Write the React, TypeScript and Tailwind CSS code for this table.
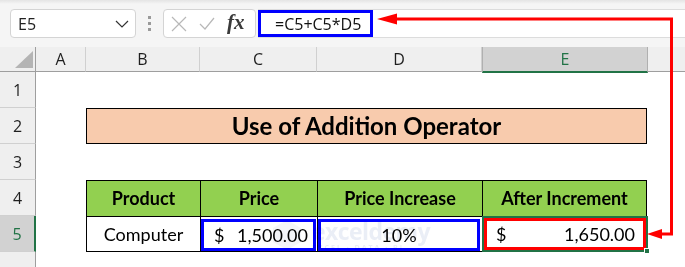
import React from 'react';

const cols = ['A', 'B', 'C', 'D', 'E'];

function ColHeader({ label, active }: { label: string; active?: boolean }) {
  if (active) {
    return (
      <div className="flex items-center justify-center bg-[#d2d2d2] border-x border-[#b0b0b0] border-b-2 border-b-[#217346] text-[#217346] text-[16px]">
        {label}
      </div>
    );
  }
  return (
    <div className="flex items-center justify-center border-r border-[#d0d0d0] border-b border-b-[#9e9e9e] text-[#1f1f1f] text-[16px]">
      {label}
    </div>
  );
}

function RowHeader({ n, active }: { n?: number; active?: boolean }) {
  return (
    <div
      className={`flex items-center justify-center text-[16px] border-b border-[#d0d0d0] ${
        active
          ? 'bg-[#d2d2d2] text-[#217346] border-r-2 border-r-[#217346]'
          : 'bg-[#efefef] text-[#1f1f1f] border-r border-r-[#9e9e9e]'
      }`}
    >
      {n}
    </div>
  );
}

function Watermark() {
  return (
    <div className="absolute left-[272px] top-[219px] flex items-center gap-[10px] opacity-35 mix-blend-multiply pointer-events-none">
      <svg width="30" height="32" viewBox="0 0 30 32">
        <polygon points="15,1 29,9 29,23 15,31 1,23 1,9" fill="#dfe3ec" />
      </svg>
      <div className="flex flex-col leading-none">
        <span className="text-[23px] font-bold text-[#c3cde4] font-['Open_Sans'] tracking-tight">exceldemy</span>
        <span className="text-[7px] font-bold text-[#c3cde4] tracking-[2px] mt-[1px]">EXCEL · DATA · BI</span>
      </div>
    </div>
  );
}

export default function App() {
  return (
    <div className="relative w-[685px] h-[267px] overflow-hidden bg-[#f5f5f5] font-['Open_Sans',sans-serif]">
      {/* formula bar */}
      <div className="h-[47px] bg-gradient-to-b from-[#e4e4e4] via-[#f5f5f5] to-[#f5f5f5] bg-[length:100%_8px] bg-no-repeat">
        <div className="flex items-center pt-[9px]">
          <div className="ml-[10px] w-[126px] h-[29px] rounded-[4px] bg-white border border-[#d4d4d4] flex items-center justify-between pl-[7px] pr-[6px]">
            <span className="text-[16px] text-[#222]">E5</span>
            <svg width="14" height="8" viewBox="0 0 14 8">
              <path d="M1 1 L7 7 L13 1" fill="none" stroke="#333" strokeWidth="1.2" />
            </svg>
          </div>
          <div className="w-[27px] flex flex-col items-center gap-[3px]">
            <span className="w-[3px] h-[3px] bg-[#9a9a9a]" />
            <span className="w-[3px] h-[3px] bg-[#9a9a9a]" />
            <span className="w-[3px] h-[3px] bg-[#9a9a9a]" />
          </div>
          <div className="w-[93px] h-[29px] rounded-[4px] bg-white border border-[#d4d4d4] flex items-center pl-[7px] gap-[12px]">
            <svg width="16" height="16" viewBox="0 0 16 16">
              <path d="M1 1 L15 15 M15 1 L1 15" stroke="#b8b8b8" strokeWidth="1.2" />
            </svg>
            <svg width="16" height="14" viewBox="0 0 16 14">
              <path d="M1 7 L6 12 L15 1" fill="none" stroke="#b8b8b8" strokeWidth="1.2" />
            </svg>
            <span className="font-['Liberation_Serif',serif] italic font-bold text-[21px] text-[#3a3a3a] -mt-[2px]">fx</span>
          </div>
          <div className="ml-[2px] flex-1 h-[29px] bg-white border-y border-[#dcdcdc] flex">
            <div className="w-[115px] h-full border-[3px] border-[#0000ff] flex items-center pl-[14px] text-[16px] text-[#111]">
              =C5+C5*D5
            </div>
          </div>
        </div>
      </div>

      {/* sheet grid */}
      <div className="grid grid-cols-[36px_50px_114px_117px_165px_166px_1fr] grid-rows-[25px_36px_36px_36px_36px_36px_36px] bg-white">
        {/* column header row */}
        <div className="relative bg-[#efefef] border-r border-[#9e9e9e] border-b border-b-[#9e9e9e]">
          <svg className="absolute left-[15px] top-[4px]" width="18" height="17" viewBox="0 0 18 17">
            <polygon points="0,17 18,0 18,17" fill="#b4b4b4" />
          </svg>
        </div>
        {cols.map((c) => (
          <div key={c} className="bg-[#efefef] grid">
            <ColHeader label={c} active={c === 'E'} />
          </div>
        ))}
        <div className="bg-[#efefef] border-b border-[#9e9e9e]" />

        {/* row 1 */}
        <RowHeader n={1} />
        <div className="col-span-6" />

        {/* row 2: title */}
        <RowHeader n={2} />
        <div />
        <div className="col-span-4 mr-px bg-[#f8cbad] border border-black flex items-center justify-center font-['Lato',sans-serif] font-bold text-[24px] text-black">
          Use of Addition Operator
        </div>
        <div />

        {/* row 3 */}
        <RowHeader n={3} />
        <div className="col-span-6" />

        {/* row 4: table header */}
        <RowHeader n={4} />
        <div />
        {['Product', 'Price', 'Price Increase', 'After Increment'].map((h, i) => (
          <div
            key={h}
            className={`bg-[#92d050] border-t border-l border-black flex items-center justify-center font-['Lato',sans-serif] font-bold text-[18px] text-black ${
              i === 3 ? 'border-r mr-px' : ''
            }`}
          >
            {h}
          </div>
        ))}
        <div />

        {/* row 5: data */}
        <RowHeader n={5} active />
        <div />
        <div className="border-t border-l border-b border-black flex items-center justify-center font-['Lato',sans-serif] text-[18px] text-black">
          Computer
        </div>
        <div className="relative border-t border-l border-b border-black font-['Lato',sans-serif] text-[18px] text-black">
          <div className="absolute left-0 top-[2px] w-[115px] h-[32px] border-[3px] border-[#0000ff] flex items-center justify-between pl-[10px] pr-[5px]">
            <span>$</span>
            <span>1,500.00</span>
          </div>
        </div>
        <div className="relative border-t border-l border-b border-black font-['Lato',sans-serif] text-[18px] text-black">
          <div className="absolute left-0 top-[2px] w-[162px] h-[32px] border-[3px] border-[#0000ff] flex items-center justify-center">
            10%
          </div>
        </div>
        <div className="relative border-2 border-[#217346] font-['Lato',sans-serif] text-[18px] text-black">
          <div className="absolute inset-0 border-[3px] border-[#ff0000] flex items-center justify-between pl-[9px] pr-[8px]">
            <span>$</span>
            <span>1,650.00</span>
          </div>
          <span className="absolute -right-[4px] -bottom-[4px] w-[6px] h-[6px] bg-[#217346] border border-white" />
        </div>
        <div />

        {/* row 6, only its top edge is in view */}
        <RowHeader />
        <div className="col-span-6" />
      </div>

      <Watermark />

      {/* red arrow from the result cell to the formula */}
      <svg className="absolute inset-0 pointer-events-none" width="685" height="267" viewBox="0 0 685 267">
        <path d="M394 19 H671.5 V234 H660" fill="none" stroke="#ff0000" strokeWidth="3" />
        <polygon points="377,19 397,13.5 397,24.5" fill="#ff0000" />
        <polygon points="647,234 662,229 662,239" fill="#ff0000" />
      </svg>
    </div>
  );
}
